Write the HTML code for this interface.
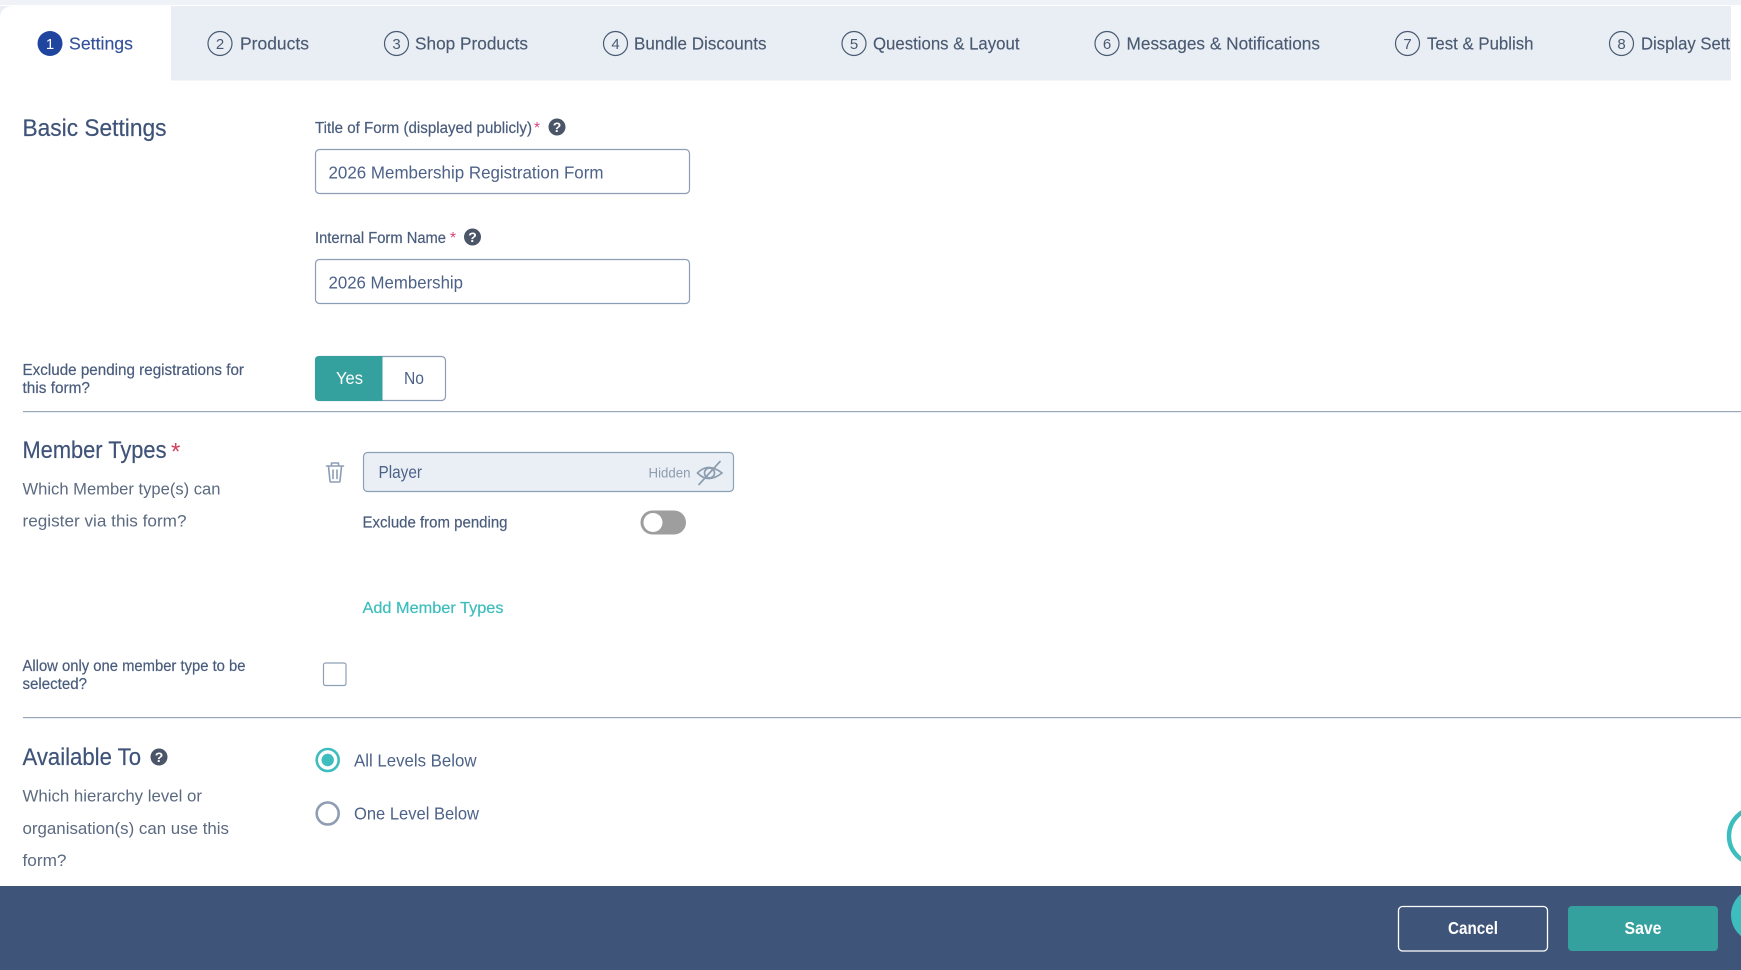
<!DOCTYPE html>
<html lang="en"><head><meta charset="utf-8"><title>Settings</title>
<style>
html,body{margin:0;padding:0;background:#fff;width:1741px;height:970px;overflow:hidden}
svg{display:block}
text{font-family:"Liberation Sans",sans-serif;white-space:pre}
.tab{font-size:17.5px;fill:#4a5a72;stroke:#4a5a72;stroke-width:.15px}
.num{font-size:15px;fill:#4a5a72;text-anchor:middle}
.h{font-size:24px;fill:#3f5379;stroke:#3f5379;stroke-width:.2px}
.lbl{font-size:15.5px;fill:#4a5c7c;stroke:#4a5c7c;stroke-width:.2px}
.val{font-size:17.5px;fill:#4d6288}
.sub{font-size:17px;fill:#5c6a80}
.star{fill:#d9447c}
.q{font-size:14px;font-weight:bold;fill:#fff;text-anchor:middle}
.btn{font-size:17.5px;font-weight:bold;fill:#fff}
</style></head><body>
<svg width="1741" height="970" viewBox="0 0 1741 970" xmlns="http://www.w3.org/2000/svg">
<rect width="1741" height="970" fill="#fff"/>
<rect width="1741" height="5" fill="#eff2f6"/>
<rect x="0" y="6" width="1731" height="74.5" fill="#e9eef4"/>
<path d="M0 80.5V18Q0 6 14 6H171V80.5Z" fill="#fff"/>

<circle cx="50" cy="43.5" r="12.5" fill="#1f459e"/>
<text x="50" y="49" class="num" style="fill:#fff">1</text>
<text x="69" y="49.5" class="tab" textLength="64" lengthAdjust="spacingAndGlyphs" style="fill:#34519b;stroke:#34519b">Settings</text>

<circle cx="220" cy="43.5" r="12" fill="none" stroke="#4a5a72" stroke-width="1.2"/>
<text x="220" y="49" class="num">2</text>
<text x="240" y="49.5" class="tab" textLength="69" lengthAdjust="spacingAndGlyphs">Products</text>

<circle cx="396.5" cy="43.5" r="12" fill="none" stroke="#4a5a72" stroke-width="1.2"/>
<text x="396.5" y="49" class="num">3</text>
<text x="415" y="49.5" class="tab" textLength="113" lengthAdjust="spacingAndGlyphs">Shop Products</text>

<circle cx="615.5" cy="43.5" r="12" fill="none" stroke="#4a5a72" stroke-width="1.2"/>
<text x="615.5" y="49" class="num">4</text>
<text x="634" y="49.5" class="tab" textLength="132.5" lengthAdjust="spacingAndGlyphs">Bundle Discounts</text>

<circle cx="854" cy="43.5" r="12" fill="none" stroke="#4a5a72" stroke-width="1.2"/>
<text x="854" y="49" class="num">5</text>
<text x="873" y="49.5" class="tab" textLength="146.5" lengthAdjust="spacingAndGlyphs">Questions &amp; Layout</text>

<circle cx="1107" cy="43.5" r="12" fill="none" stroke="#4a5a72" stroke-width="1.2"/>
<text x="1107" y="49" class="num">6</text>
<text x="1126.5" y="49.5" class="tab" textLength="193.5" lengthAdjust="spacingAndGlyphs">Messages &amp; Notifications</text>

<circle cx="1407.5" cy="43.5" r="12" fill="none" stroke="#4a5a72" stroke-width="1.2"/>
<text x="1407.5" y="49" class="num">7</text>
<text x="1427" y="49.5" class="tab" textLength="106.5" lengthAdjust="spacingAndGlyphs">Test &amp; Publish</text>

<circle cx="1621.5" cy="43.5" r="12" fill="none" stroke="#4a5a72" stroke-width="1.2"/>
<text x="1621.5" y="49" class="num">8</text>
<text x="1641" y="49.5" class="tab" textLength="89" lengthAdjust="spacingAndGlyphs">Display Sett</text>

<text x="22.5" y="136" class="h" textLength="144" lengthAdjust="spacingAndGlyphs">Basic Settings</text>

<text x="315" y="133" class="lbl" textLength="217" lengthAdjust="spacingAndGlyphs">Title of Form (displayed publicly)</text>
<text x="534" y="133" class="lbl star" style="stroke:none">*</text>
<circle cx="557" cy="127" r="8.5" fill="#4a5568"/><text x="557" y="132" class="q">?</text>
<rect x="315.5" y="149.5" width="374" height="44" rx="4" fill="#fff" stroke="#8c9db5" stroke-width="1.2"/>
<text x="328.5" y="178.5" class="val" textLength="275" lengthAdjust="spacingAndGlyphs">2026 Membership Registration Form</text>

<text x="315" y="243" class="lbl" textLength="131" lengthAdjust="spacingAndGlyphs">Internal Form Name</text>
<text x="450" y="243" class="lbl star" style="stroke:none">*</text>
<circle cx="472.5" cy="237" r="8.5" fill="#4a5568"/><text x="472.5" y="242" class="q">?</text>
<rect x="315.5" y="259.5" width="374" height="44" rx="4" fill="#fff" stroke="#8c9db5" stroke-width="1.2"/>
<text x="328.5" y="288.5" class="val" textLength="134.5" lengthAdjust="spacingAndGlyphs">2026 Membership</text>

<text x="22.5" y="375" class="lbl" textLength="221.5" lengthAdjust="spacingAndGlyphs">Exclude pending registrations for</text>
<text x="22.5" y="393" class="lbl" textLength="67.5" lengthAdjust="spacingAndGlyphs">this form?</text>
<rect x="315.5" y="356.5" width="130" height="44" rx="4" fill="#fff" stroke="#8c9db5" stroke-width="1.2"/>
<path d="M319 356H382.5V401H319Q315 401 315 397V360Q315 356 319 356Z" fill="#35a19f"/>
<text x="336" y="384" class="val" style="fill:#fff" textLength="27" lengthAdjust="spacingAndGlyphs">Yes</text>
<text x="404" y="384" class="val" textLength="20" lengthAdjust="spacingAndGlyphs">No</text>

<rect x="23" y="411" width="1718" height="1.2" fill="#98a6ba"/>

<text x="22.5" y="458" class="h" textLength="144" lengthAdjust="spacingAndGlyphs">Member Types</text>
<text x="171" y="459.5" fill="#d2405f" style="font-size:24px">*</text>
<text x="22.5" y="494.5" class="sub" textLength="198" lengthAdjust="spacingAndGlyphs">Which Member type(s) can</text>
<text x="22.5" y="526.5" class="sub" textLength="164" lengthAdjust="spacingAndGlyphs">register via this form?</text>

<g fill="none" stroke="#8c9db5" stroke-width="1.6" stroke-linecap="round" stroke-linejoin="round" transform="translate(0,-.5)">
<path d="M326.5 466.5H343.5"/>
<path d="M331.5 466V463.5H338.5V466"/>
<path d="M328.5 467L330 481.5Q330 482.5 331 482.5H339Q340 482.5 340 481.5L341.5 467"/>
<path d="M333 470.5V479M337 470.5V479"/>
</g>

<rect x="363.5" y="452.5" width="370" height="39" rx="4" fill="#e9eff5" stroke="#8ca0b8" stroke-width="1.2"/>
<text x="378.5" y="478" class="val" textLength="43.5" lengthAdjust="spacingAndGlyphs">Player</text>
<text x="648.5" y="477.5" style="font-size:14px;fill:#8e9db0" textLength="42" lengthAdjust="spacingAndGlyphs">Hidden</text>
<g fill="none" stroke="#8c9db0" stroke-width="1.7">
<path d="M697.5 473Q708 462 722 473Q708 484 697.5 473Z"/>
<circle cx="709.5" cy="473" r="5"/>
<path d="M699 484.5L720 461.5" stroke-linecap="round"/>
</g>

<text x="362.5" y="527.5" class="lbl" textLength="145" lengthAdjust="spacingAndGlyphs">Exclude from pending</text>
<rect x="640.5" y="510.5" width="45.5" height="24" rx="12" fill="#9e9e9e"/>
<circle cx="653" cy="522.5" r="9.5" fill="#fff"/>

<text x="362.5" y="613" class="lbl" style="fill:#3dbdbd;stroke:#3dbdbd;font-size:16px" textLength="141" lengthAdjust="spacingAndGlyphs">Add Member Types</text>

<text x="22.5" y="671" class="lbl" textLength="223" lengthAdjust="spacingAndGlyphs">Allow only one member type to be</text>
<text x="22.5" y="689" class="lbl" textLength="64.5" lengthAdjust="spacingAndGlyphs">selected?</text>
<rect x="323.5" y="663" width="22.5" height="22.5" rx="2" fill="#fff" stroke="#8ea0b6" stroke-width="1.2"/>

<rect x="23" y="717" width="1718" height="1.2" fill="#98a6ba"/>

<text x="22.5" y="765" class="h" textLength="118.5" lengthAdjust="spacingAndGlyphs">Available To</text>
<circle cx="159" cy="757" r="8.5" fill="#4a5568"/><text x="159" y="762" class="q">?</text>
<text x="22.5" y="801.5" class="sub" textLength="179.5" lengthAdjust="spacingAndGlyphs">Which hierarchy level or</text>
<text x="22.5" y="834" class="sub" textLength="206.5" lengthAdjust="spacingAndGlyphs">organisation(s) can use this</text>
<text x="22.5" y="866" class="sub" textLength="44" lengthAdjust="spacingAndGlyphs">form?</text>

<circle cx="327.7" cy="760" r="11" fill="#fff" stroke="#3dbdbd" stroke-width="2.6"/>
<circle cx="327.7" cy="760" r="6.2" fill="#3dbdbd"/>
<text x="354" y="766.5" class="val" textLength="122.5" lengthAdjust="spacingAndGlyphs">All Levels Below</text>
<circle cx="327.7" cy="813.5" r="11" fill="#fff" stroke="#8e9db2" stroke-width="2.6"/>
<text x="354" y="819.5" class="val" textLength="125" lengthAdjust="spacingAndGlyphs">One Level Below</text>

<circle cx="1757" cy="836" r="28" fill="#fff" stroke="#3dbdbd" stroke-width="4.5"/>

<rect x="0" y="886" width="1741" height="84" fill="#3f5479"/>
<rect x="1398.5" y="906.5" width="149" height="44.5" rx="4" fill="none" stroke="#fff" stroke-width="1.3"/>
<text x="1448" y="934" class="btn" textLength="50" lengthAdjust="spacingAndGlyphs">Cancel</text>
<rect x="1568" y="906" width="150" height="45" rx="4" fill="#35a19f"/>
<text x="1624.5" y="934" class="btn" textLength="37" lengthAdjust="spacingAndGlyphs">Save</text>
<circle cx="1758" cy="915" r="27" fill="#3dbdbd"/>
</svg>
</body></html>
